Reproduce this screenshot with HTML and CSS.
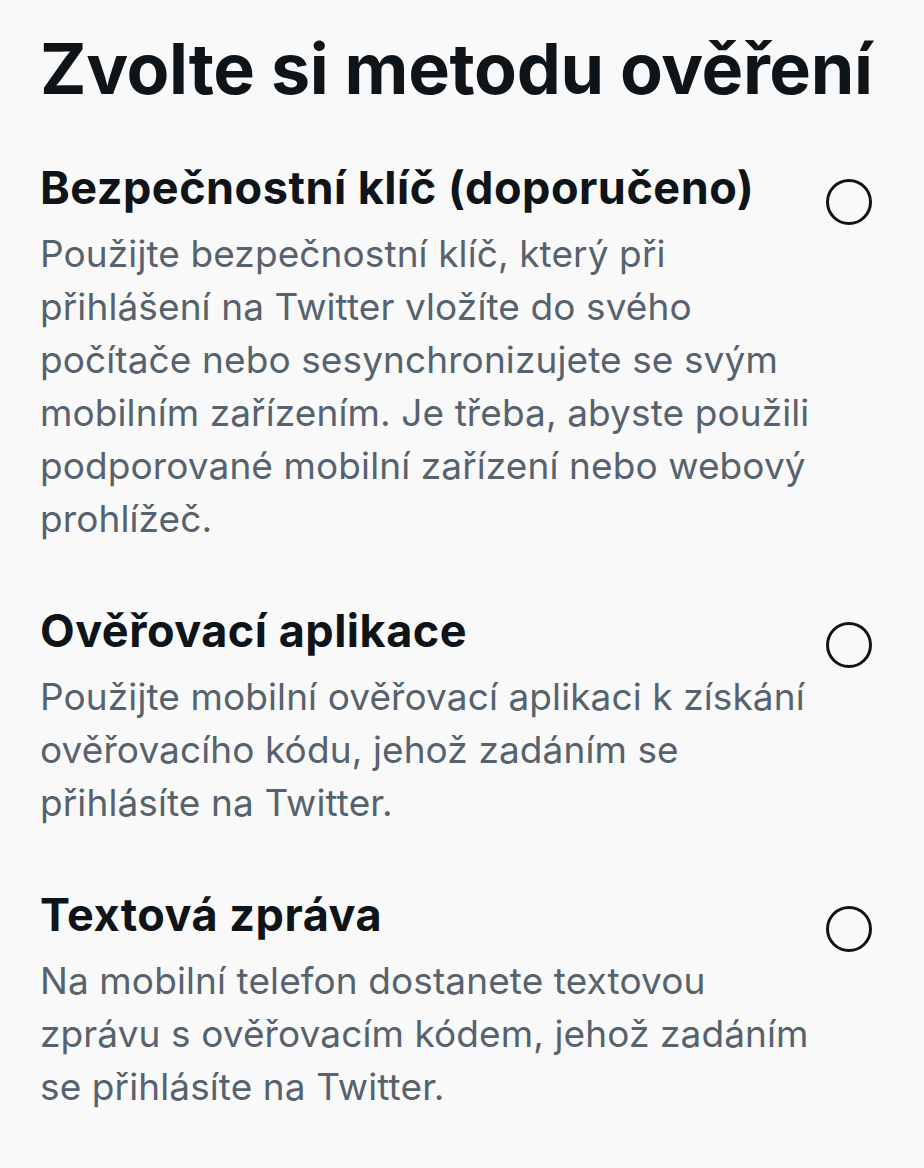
FILE: index.html
```html
<!DOCTYPE html>
<html lang="cs">
<head>
<meta charset="utf-8">
<title>Zvolte si metodu ověření</title>
<link rel="stylesheet" href="styles.css">
</head>
<body>
<main class="page">
  <h1 class="title">Zvolte si metodu ověření</h1>

  <section class="option">
    <div class="option-head">
      <h2 class="option-title">Bezpečnostní klíč (doporučeno)</h2>
      <span class="radio"></span>
    </div>
    <p class="option-desc">Použijte bezpečnostní klíč, který při<br>přihlášení na Twitter vložíte do svého<br>počítače nebo sesynchronizujete se svým<br>mobilním zařízením. Je třeba, abyste použili<br>podporované mobilní zařízení nebo webový<br>prohlížeč.</p>
  </section>

  <section class="option">
    <div class="option-head">
      <h2 class="option-title">Ověřovací aplikace</h2>
      <span class="radio"></span>
    </div>
    <p class="option-desc">Použijte mobilní ověřovací aplikaci k získání<br>ověřovacího kódu, jehož zadáním se<br>přihlásíte na Twitter.</p>
  </section>

  <section class="option">
    <div class="option-head">
      <h2 class="option-title">Textová zpráva</h2>
      <span class="radio"></span>
    </div>
    <p class="option-desc">Na mobilní telefon dostanete textovou<br>zprávu s ověřovacím kódem, jehož zadáním<br>se přihlásíte na Twitter.</p>
  </section>
</main>
</body>
</html>
```

FILE: styles.css
```css
html, body {
  margin: 0;
  padding: 0;
  background: #f9f9f9;
}

.page {
  width: 924px;
  height: 1168px;
  box-sizing: border-box;
  padding: 26px 52px 0 40px;
  font-family: Inter, "Noto Sans", "Liberation Sans", sans-serif;
  color: #0f1419;
  overflow: hidden;
}

.title {
  margin: 0 0 48px;
  font-size: 70px;
  line-height: 86px;
  font-weight: 700;
  letter-spacing: -0.35px;
  white-space: nowrap;
}

.option {
  margin-bottom: 58px;
}

.option-head {
  display: flex;
  align-items: flex-start;
  justify-content: space-between;
  margin-bottom: 2px;
}

.option-title {
  margin: 0;
  font-size: 45px;
  line-height: 56px;
  font-weight: 700;
  letter-spacing: 0.5px;
  white-space: nowrap;
}

.radio {
  flex: none;
  width: 40px;
  height: 40px;
  margin-top: 19px;
  border: 3.5px solid #0f1419;
  border-radius: 50%;
}

.option-desc {
  margin: 0;
  font-size: 37px;
  line-height: 53px;
  letter-spacing: 0.1px;
  color: #56626d;
  white-space: nowrap;
}
```
